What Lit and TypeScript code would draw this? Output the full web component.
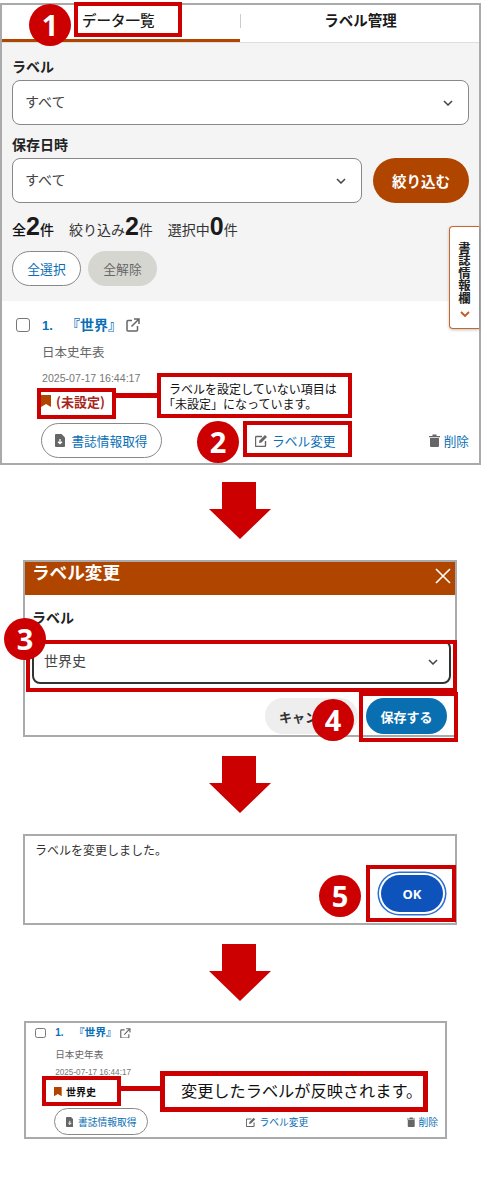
import { LitElement, html, css } from "lit";
import { customElement, property } from "lit/decorators.js";

const chevron = html`<svg class="chev" width="10" height="6" viewBox="0 0 10 6"><path d="M1 1l4 4 4-4" fill="none" stroke="#444" stroke-width="1.5"/></svg>`;

@customElement("book-item")
class BookItem extends LitElement {
  @property() label = "(未設定)";
  @property({ type: Boolean, reflect: true }) compact = false;

  static styles = css`
    :host { display: block; background: #fff; font-family: "Noto Sans CJK JP", "Noto Sans", sans-serif; }
    :host([compact]) { zoom: 0.77; }
    .item { padding: 14px 10px 5px 14px; }
    :host([compact]) .item { padding: 3px 9px 2px 12px; }
    .row1 { display: flex; align-items: center; height: 20px; }
    .check { width: 14px; height: 14px; border: 1px solid #777; border-radius: 3px; box-sizing: border-box; background: #fff; margin-right: 12px; flex: none; }
    .num { color: #0a6fb5; font: 700 13px "Liberation Sans", sans-serif; width: 30px; }
    .title { color: #0a6fb5; font-size: 14px; font-weight: 700; margin-left: -6px; line-height: 18px; padding-bottom: 2px; }
    .ext { margin-left: 4px; display: block; }
    .body { margin-left: 26px; }
    .pub { height: 18px; line-height: 16px; margin-top: 9px; font-size: 12.5px; color: #666; }
    .date { height: 14px; margin-top: 9px; font: 10.6px/14px "Liberation Sans", sans-serif; color: #777; }
    .lab { height: 18px; line-height: 17px; margin-top: 7px; display: flex; align-items: center; gap: 5px; font-size: 13px; font-weight: 700; color: #111; margin-left: -1px; }
    .lab.unset { color: #a8261c; }
    .actions { display: flex; justify-content: space-between; align-items: center; margin-top: 13px; margin-left: -1px; }
    .act { display: flex; align-items: center; gap: 4px; color: #0a6fb5; font-size: 12.7px; }
    .act.pill { height: 35px; width: 121px; box-sizing: border-box; border: 1px solid #888; border-radius: 18px; justify-content: center; gap: 6px; }
    svg { flex: none; display: block; }
  `;

  render() {
    return html`<div class="item">
      <div class="row1">
        <span class="check"></span>
        <span class="num">1.</span>
        <span class="title">『世界』</span>
        <svg class="ext" width="14" height="14" viewBox="0 0 14 14"><path d="M6 2.5H2a1 1 0 0 0-1 1V12a1 1 0 0 0 1 1h8.5a1 1 0 0 0 1-1V8" fill="none" stroke="#666" stroke-width="1.5"/><path d="M5.5 8.5L12.5 1.5M8 1h5v5" fill="none" stroke="#666" stroke-width="1.5"/></svg>
      </div>
      <div class="body">
        <div class="pub">日本史年表</div>
        <div class="date">2025-07-17 16:44:17</div>
        <div class="lab ${this.compact ? "" : "unset"}">
          <svg width="10" height="12" viewBox="0 0 10 12"><path d="M0 0h10v12L5 9 0 12z" fill="#b04500"/></svg>
          <span>${this.label}</span>
        </div>
        <div class="actions">
          <div class="act pill">
            <svg width="10" height="13" viewBox="0 0 10 13"><path d="M1 0h5.500L10 3.500V12a1 1 0 0 1-1 1H1a1 1 0 0 1-1-1V1a1 1 0 0 1 1-1z" fill="#666"/><path d="M5 5v4.500M3 7.700l2 2 2-2" fill="none" stroke="#fff" stroke-width="1.300"/></svg>
            <span>書誌情報取得</span>
          </div>
          <div class="act">
            <svg width="13" height="13" viewBox="0 0 13 13"><path d="M7 2.500H1.500a1 1 0 0 0-1 1v8a1 1 0 0 0 1 1h8a1 1 0 0 0 1-1V7" fill="none" stroke="#666" stroke-width="1.400"/><path d="M4.500 6.500L10 1l2 2-5.500 5.500-2.500.5z" fill="#666"/></svg>
            <span>ラベル変更</span>
          </div>
          <div class="act">
            <svg width="11" height="13" viewBox="0 0 11 13"><path d="M0 2h11v1.300H0zM3.500.5h4V2h-4zM1 4h9v8a1 1 0 0 1-1 1H2a1 1 0 0 1-1-1z" fill="#666"/></svg>
            <span>削除</span>
          </div>
        </div>
      </div>
    </div>`;
  }
}

@customElement("app-root")
class AppRoot extends LitElement {
  static styles = css`
    :host { display: block; position: relative; width: 481px; height: 1194px; overflow: hidden; background: #fff; color: #222; font-family: "Noto Sans CJK JP", "Noto Sans", sans-serif; font-size: 14px; }
    .page { padding-top: 3px; display: flex; flex-direction: column; align-items: flex-start; }
    .panel { box-sizing: border-box; border: 2px solid #aaa; background: #fff; }

    /* Panel 1 */
    .p1 { width: 481px; height: 462px; overflow: hidden; }
    .tabs { display: flex; height: 38px; box-sizing: border-box; border-bottom: 1px solid #ddd; position: relative; }
    .tab { flex: 1; text-align: center; font-weight: 700; font-size: 14.5px; line-height: 30px; height: 37px; box-sizing: border-box; color: #1a1a1a; }
    .tab.on { flex: none; width: 238px; border-bottom: 3px solid #b04500; text-align: left; padding-left: 80px; font-weight: 500; }
    .tab.off { position: relative; padding-left: 2px; }
    .tab.off::before { content: ""; position: absolute; left: 0; top: 9px; height: 14px; width: 1px; background: #ccc; }
    .filter { background: #f4f4f4; height: 258px; padding: 14px 10px 0; box-sizing: border-box; }
    .flabel { font-weight: 700; font-size: 14px; line-height: 18px; height: 20px; color: #222; }
    .select { box-sizing: border-box; height: 45px; background: #fff; border: 1px solid #888; border-radius: 8px; display: flex; align-items: center; justify-content: space-between; padding: 0 15px 0 12px; font-size: 14px; color: #444; }
    .select span { padding-bottom: 4px; }
    .chev { display: block; flex: none; }
    .mt3 { margin-top: 3px; }
    .mt10 { margin-top: 10px; }
    .row { display: flex; gap: 11px; margin-top: 3px; }
    .row .select { flex: 1; }
    .narrow { width: 350px; }
    .apply { width: 96px; height: 45px; border-radius: 23px; background: #b04500; color: #fff; font-weight: 700; font-size: 14.5px; display: flex; align-items: center; justify-content: center; }
    .counts { display: flex; gap: 15px; align-items: baseline; margin-top: 13px; height: 20px; line-height: 20px; font-size: 14px; color: #333; }
    .counts b { font: 700 25px/20px "Liberation Sans", sans-serif; color: #1a1a1a; }
    .counts .all { font-weight: 500; color: #111; }
    .sel { display: flex; gap: 7px; margin-top: 15px; }
    .sbtn { width: 69px; height: 35px; border-radius: 18px; box-sizing: border-box; display: flex; align-items: center; justify-content: center; font-size: 12.8px; }
    .sbtn.a { background: #fff; border: 1px solid #888; color: #0a6fb5; }
    .sbtn.b { background: #d6d6d1; color: #666; }

    /* hanging tab */
    .hang { position: absolute; left: 449px; top: 226px; width: 30px; height: 103px; box-sizing: border-box; background: #fff; border: 1px solid #c4682e; border-right: 0; border-radius: 4px 0 0 4px; box-shadow: 0 1px 3px rgba(0,0,0,.25); display: flex; flex-direction: column; align-items: center; padding-top: 15px; }
    .hang span { writing-mode: vertical-rl; font-weight: 700; font-size: 12.400px; line-height: 16px; color: #222; margin-bottom: 7px; }

    /* Arrows */
    .arrow { display: block; margin-left: 209px; }
    .a1 { margin-top: 17px; }
    .a2 { margin-top: 19px; }

    /* Modal */
    .modal { margin-top: 21px; margin-left: 23px; width: 434px; height: 177px; }
    .mhead { height: 33px; background: #b04500; display: flex; align-items: flex-start; justify-content: space-between; padding: 0 3px 0 7px; color: #fff; font-weight: 700; font-size: 17.600px; line-height: 20px; }
    .mhead svg { margin-top: 5px; }
    .mlabel { margin: 12px 0 0 7px; font-weight: 700; font-size: 14px; line-height: 20px; height: 20px; }
    .mselect { margin: 13px 4px 0 7px; height: 44px; border: 2px solid #333; padding: 0 11px 0 10px; }
    .mfoot { display: flex; justify-content: flex-end; gap: 8px; margin-top: 14px; padding-right: 8px; }
    .mbtn { height: 36px; border-radius: 18px; display: flex; align-items: center; justify-content: center; font-size: 13px; font-weight: 700; }
    .cancel { width: 93px; background: #eee; color: #333; }
    .save { width: 81px; background: #0a6fb0; color: #fff; }

    /* Message dialog */
    .dialog { margin-top: 21px; margin-left: 23px; width: 434px; height: 91px; display: flex; flex-direction: column; padding: 5px 12px 11px 10px; }
    .msg { font-size: 12px; line-height: 18px; color: #333; }
    .ok { align-self: flex-end; width: 62px; height: 37px; margin-top: auto; border-radius: 19px; background: #0d53bb; color: #fff; font: 700 13px "Open Sans", sans-serif; display: flex; align-items: center; justify-content: center; box-shadow: 0 0 0 2px #fff, 0 0 0 3.500px #2a70d0; }

    /* Result panel */
    .p3 { margin-top: 20px; margin-left: 24px; width: 423px; height: 118px; overflow: hidden; }

    /* Annotations */
    .badge { position: absolute; width: 42px; height: 42px; border-radius: 50%; background: #cc0000; color: #fff; font: 700 29px/42px "Open Sans", sans-serif; text-align: center; }
    .b1 { left: 29px; top: 4px; }
    .b2 { left: 197px; top: 421px; }
    .b3 { left: 4px; top: 618px; }
    .b4 { left: 312px; top: 699px; }
    .b5 { left: 319px; top: 875px; }
    .box { position: absolute; box-sizing: border-box; border: 4px solid #cc0000; }
    .x1 { left: 74px; top: 2px; width: 108px; height: 35px; }
    .x2 { left: 37px; top: 388px; width: 79px; height: 31px; }
    .x3 { left: 243px; top: 421px; width: 109px; height: 36px; }
    .x4 { left: 26px; top: 640px; width: 431px; height: 52px; }
    .x5 { left: 359px; top: 692px; width: 99px; height: 50px; }
    .x6 { left: 366px; top: 865px; width: 90px; height: 57px; }
    .x7 { left: 42px; top: 1076px; width: 79px; height: 30px; }
    .line { position: absolute; background: #cc0000; height: 5px; }
    .l1 { left: 116px; top: 393px; width: 42px; }
    .l2 { left: 121px; top: 1086px; width: 40px; }
    .note { position: absolute; box-sizing: border-box; border: 4px solid #cc0000; background: #fff; color: #111; }
    .n1 { left: 157px; top: 373px; width: 195px; height: 45px; padding: 4px 0 0 8px; font-size: 12px; line-height: 15px; }
    .open { margin-left: -6px; }
    .n2 { left: 160px; top: 1071px; width: 268px; height: 41px; font-size: 16.200px; line-height: 29px; padding-left: 16px; border-width: 5px; white-space: nowrap; }
  `;

  private arrow(cls: string) {
    return html`<svg class="arrow ${cls}" width="62" height="57" viewBox="0 0 62 57"><path d="M13 0h34v27h15L31 57 0 27h13z" fill="#cc0000"/></svg>`;
  }

  render() {
    return html`
      <div class="page">
        <section class="panel p1">
          <div class="tabs">
            <div class="tab on">データ一覧</div>
            <div class="tab off">ラベル管理</div>
          </div>
          <div class="filter">
            <div class="flabel">ラベル</div>
            <div class="select mt3"><span>すべて</span>${chevron}</div>
            <div class="flabel mt10">保存日時</div>
            <div class="row">
              <div class="select narrow"><span>すべて</span>${chevron}</div>
              <div class="apply">絞り込む</div>
            </div>
            <div class="counts">
              <span class="all">全<b>2</b>件</span>
              <span>絞り込み<b>2</b>件</span>
              <span>選択中<b>0</b>件</span>
            </div>
            <div class="sel">
              <div class="sbtn a">全選択</div>
              <div class="sbtn b">全解除</div>
            </div>
          </div>
          <book-item></book-item>
        </section>

        ${this.arrow("a1")}

        <section class="panel modal">
          <div class="mhead">
            <span>ラベル変更</span>
            <svg width="18" height="18" viewBox="0 0 18 18"><path d="M2 2l14 14M16 2L2 16" stroke="#fff" stroke-width="1.600" fill="none"/></svg>
          </div>
          <div class="mlabel">ラベル</div>
          <div class="select mselect"><span>世界史</span>${chevron}</div>
          <div class="mfoot">
            <div class="mbtn cancel">キャンセル</div>
            <div class="mbtn save">保存する</div>
          </div>
        </section>

        ${this.arrow("a2")}

        <section class="panel dialog">
          <div class="msg">ラベルを変更しました。</div>
          <div class="ok">OK</div>
        </section>

        ${this.arrow("a2")}

        <section class="panel p3">
          <book-item compact label="世界史"></book-item>
        </section>
      </div>

      <div class="hang">
        <span>書誌情報欄</span>
        <svg width="10" height="6" viewBox="0 0 10 6"><path d="M1 1l4 4 4-4" fill="none" stroke="#c4581e" stroke-width="1.800"/></svg>
      </div>

      <div class="box x1"></div>
      <div class="badge b1">1</div>
      <div class="line l1"></div>
      <div class="box x2"></div>
      <div class="note n1">ラベルを設定していない項目は<br><span class="open">「未設定」になっています。</span></div>
      <div class="box x3"></div>
      <div class="badge b2">2</div>
      <div class="box x4"></div>
      <div class="badge b3">3</div>
      <div class="box x5"></div>
      <div class="badge b4">4</div>
      <div class="box x6"></div>
      <div class="badge b5">5</div>
      <div class="line l2"></div>
      <div class="box x7"></div>
      <div class="note n2">変更したラベルが反映されます。</div>
    `;
  }
}
